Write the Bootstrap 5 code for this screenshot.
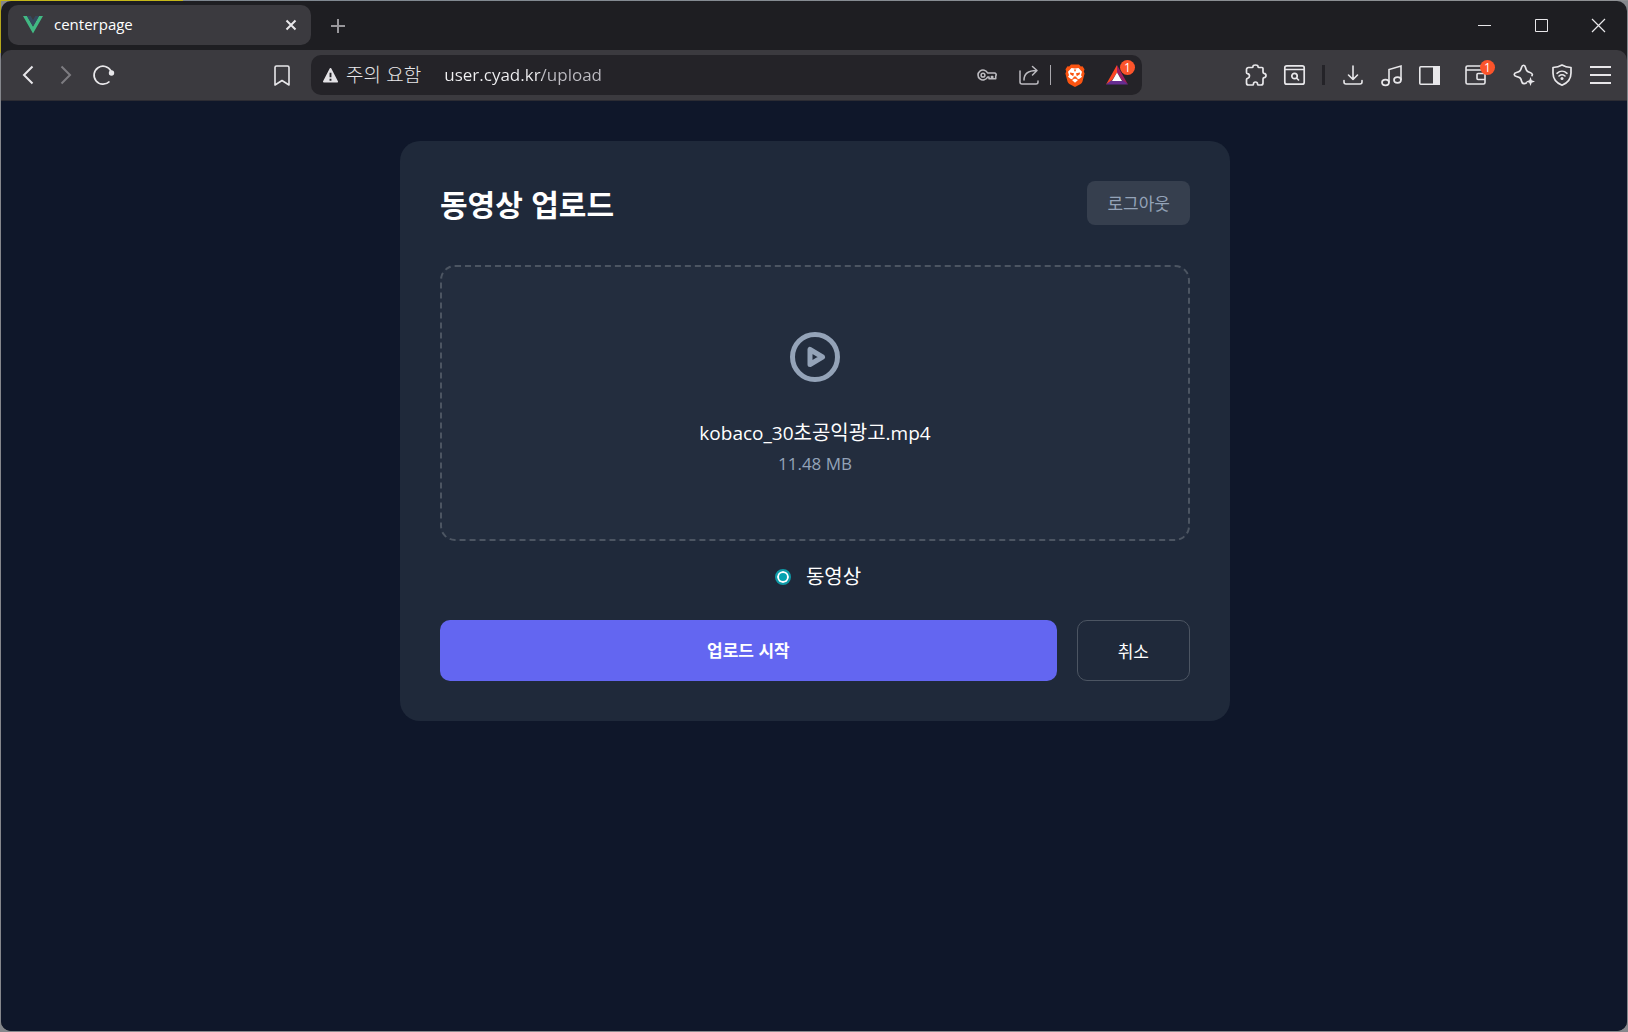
<!DOCTYPE html>
<html lang="ko">
<head>
<meta charset="utf-8">
<meta name="viewport" content="width=device-width, initial-scale=1">
<title>centerpage</title>
<link href="https://cdn.jsdelivr.net/npm/bootstrap@5.3.0/dist/css/bootstrap.min.css" rel="stylesheet">
<style>
  html, body { height: 100%; }
  body {
    font-family: "Open Sans", "Noto Sans CJK KR", sans-serif;
    color: #fff;
    padding: 1px;
    overflow: hidden;
    background: linear-gradient(to right, #c6b81a 183px, #7e8790 183px, #8f9194 100%) 0 0 / 100% 1px no-repeat,
                linear-gradient(to bottom, #b5a71c 53px, #85878c 53px) 0 0 / 1px 100% no-repeat, #85878c;
  }
  svg { display: block; fill: none; stroke: currentColor; stroke-width: 2; overflow: visible; }
  .app-window { height: 100%; border-radius: 10px; overflow: hidden; background: #1e1e22; }
  .tab-strip { height: 49px; }
  .browser-tab { width: 303px; height: 40px; margin: 4px 0 0 7px; padding: 0 9px 0 15px; border-radius: 10px; background: #3b3a3f; font-size: 15px; }
  .tab-title { padding: 0 0 2px 11px; }
  .icon-btn { border: 0; padding: 0; background: none; color: #e8e7ea; display: flex; align-items: center; justify-content: center; flex: none; position: relative; }
  .tab-close { width: 22px; height: 22px; }
  .tab-new { width: 54px; height: 49px; color: #98979b; }
  .win-ctl { width: 57px; height: 49px; }
  .toolbar { height: 51px; background: #3b3a3f; border-radius: 10px 10px 0 0; padding: 0 8px; border-bottom: 1px solid #2c2c33; }
  .toolbar .icon-btn { width: 38px; height: 40px; }
  .nav-side { width: 292px; margin-right: 10px; }
  .addr-box { height: 40px; background: #242328; border-radius: 10px; padding: 0 4px 0 11px; margin-right: 95px; min-width: 0; }
  .addr-box .icon-btn { width: 42px; color: #bcbbc0; }
  .warn-label { font-family: "Noto Sans CJK KR", sans-serif; font-weight: 300; font-size: 19px; line-height: 28px; color: #e8e7ea; margin: 0 23px 0 7px; padding-bottom: 3px; }
  .addr-field { border: 0; outline: 0; padding: 0 0 2px; min-width: 0; font-size: 17px; height: 28px; color: transparent; background: linear-gradient(to right, #f1f1f3 98px, #bdbcc2 98px); -webkit-background-clip: text; background-clip: text; }
  .addr-rule { width: 1px; height: 20px; background: #a9a8ad; margin-right: 3px; }
  .bar-rule { width: 3px; height: 20px; background: #242328; margin: 0 9px; }
  .assist-btn { margin-left: 11px; }
  .count-dot { position: absolute; top: 5px; right: 3px; width: 15px; height: 15px; border-radius: 50%; background: #fb542b; color: #fff; font-size: 12px; line-height: 15px; text-align: center; }
  .wallet-btn .count-dot { right: -1px; }
  .viewport-area { background: #0f172a; padding: 40px 20px 40px 22px; }
  .upload-card { width: 100%; max-width: 830px; padding: 40px; border-radius: 20px; background: #1f293a; }
  .page-title { font-size: 30px; font-weight: 700; line-height: 44px; font-family: "Noto Sans CJK KR", sans-serif; }
  .logout-btn { height: 44px; padding: 2px 20px 0; border: 0; border-radius: 8px; background: #363f4e; color: #94a3b8; font-size: 17px; }
  .drop-zone { margin-top: 40px; padding: 60px 20px; border: 2px dashed #4c5562; border-radius: 15px; background: #232d3e; cursor: pointer; }
  .drop-zone svg { color: #94a3b8; }
  .file-name { margin-top: 30px; font-size: 19px; line-height: 32px; }
  .file-name span { font-size: 20px; }
  .file-size { font-size: 17px; line-height: 30px; color: #94a3b8; }
  .kind-row { margin: 20px 0 27px; padding-left: 6px; font-size: 20px; line-height: 32px; gap: 15px; }
  .kind-radio { appearance: none; margin: 0; width: 16px; height: 16px; border-radius: 50%; background: #05a2b0; border: 2px solid #0f9aa7; box-shadow: inset 0 0 0 2px #fff; }
  .action-btn { height: 61px; border-radius: 10px; font-size: 17px; padding-top: 2px; }
  .start-btn { border: 0; background: #6366f1; color: #fff; font-weight: 700; }
  .cancel-btn { border: 1px solid #4c5562; background: none; color: #fff; padding: 2px 40px 0; }
</style>
</head>
<body>
<div class="app-window d-flex flex-column">
  <header class="tab-strip d-flex flex-shrink-0">
    <div class="browser-tab d-flex align-items-center">
      <svg width="20" height="18" viewBox="0 0 20 18" style="stroke:none"><path fill="#41b883" d="M0 0h4l6 10.500L16 0h4L10 17.500z"/><path fill="#35495e" d="M4 0h3.700L10 4l2.300-4H16l-6 10.500z"/></svg>
      <span class="tab-title flex-grow-1">centerpage</span>
      <button class="icon-btn tab-close" aria-label="Close tab"><svg width="10" height="10" viewBox="0 0 10 10"><path d="M0.500 0.500l9 9M9.500 0.500l-9 9"/></svg></button>
    </div>
    <button class="icon-btn tab-new" aria-label="New tab"><svg width="14" height="14" viewBox="0 0 14 14"><path d="M7 0v14M0 7h14"/></svg></button>
    <div class="d-flex ms-auto">
      <button class="icon-btn win-ctl" aria-label="Minimize"><svg width="13" height="13" viewBox="0 0 13 13"><path stroke-width="1" d="M0 6.500h13"/></svg></button>
      <button class="icon-btn win-ctl" aria-label="Maximize"><svg width="13" height="13" viewBox="0 0 13 13"><path stroke-width="1" d="M.5.5h12v12H.5z"/></svg></button>
      <button class="icon-btn win-ctl" aria-label="Close"><svg width="13" height="13" viewBox="0 0 13 13"><path stroke-width="1.200" d="M0 0l13 13M13 0L0 13"/></svg></button>
    </div>
  </header>

  <nav class="toolbar d-flex align-items-center flex-shrink-0">
    <div class="nav-side d-flex flex-shrink-0">
      <button class="icon-btn" aria-label="Back"><svg width="10" height="18" viewBox="0 0 10 18"><path d="M9.500.5L1 9l8.500 8.500"/></svg></button>
      <button class="icon-btn" aria-label="Forward"><svg width="10" height="18" viewBox="0 0 10 18" style="color:#7d7c81"><path d="M.5.5L9 9 .5 17.500"/></svg></button>
      <button class="icon-btn" aria-label="Reload"><svg width="22" height="20" viewBox="0 0 22 20"><path stroke-width="1.700" d="M18 6A9 9 0 1 0 16.500 16.500"/><circle cx="18.500" cy="8" r="2.700" fill="currentColor" stroke="none"/></svg></button>
      <button class="icon-btn ms-auto" aria-label="Bookmark"><svg width="16" height="21" viewBox="0 0 16 21"><path stroke-width="1.600" stroke-linejoin="round" d="M2.500 1h11a1.500 1.500 0 0 1 1.500 1.500V20l-7-4.500L1 20V2.500A1.500 1.500 0 0 1 2.500 1z"/></svg></button>
    </div>
    <div class="addr-box d-flex align-items-center flex-grow-1">
      <svg class="flex-shrink-0" width="17" height="16" viewBox="0 0 18 17"><path fill="#e3e2e6" stroke="#e3e2e6" stroke-width="2" stroke-linejoin="round" d="M9 2l7 13.500H2z"/><path stroke="#242328" stroke-width="2" d="M9 6v5M9 12.500v2"/></svg>
      <label class="warn-label text-nowrap" for="addr">주의 요함</label>
      <input class="addr-field flex-grow-1" id="addr" type="text" value="user.cyad.kr/upload">
      <button class="icon-btn" aria-label="Passwords"><svg width="20" height="13" viewBox="0 0 20 13"><path stroke-width="1.600" stroke-linejoin="round" d="M10.600 4H17.500a1.700 1.700 0 0 1 1.500 2.500l-.3.800v2.500h-3V7.500h-1.200v2.300H12V8H10.600A5 5 0 1 1 10.600 4z"/><circle cx="6" cy="6.200" r="1.900" stroke-width="1.500"/></svg></button>
      <button class="icon-btn" aria-label="Share"><svg width="20" height="19" viewBox="0 0 20 19"><path stroke-width="1.500" stroke-linecap="round" stroke-linejoin="round" d="M1 5v11a2 2 0 0 0 2 2h14a2 2 0 0 0 2-2v-1M5 14c0-6 4-9.500 12.500-9.500M13.500.5l4.500 4-4.500 4.500"/></svg></button>
      <div class="addr-rule"></div>
      <button class="icon-btn" aria-label="Brave Shields"><svg width="20" height="23" viewBox="0 0 20 23" style="stroke:none"><path fill="#fb5411" d="M6 .5h8l1.800 2 1.700-.3 2 3-.7 2.200.8 2-2.200 8.300c-.3 1-1 1.700-1.800 2.200L10 23l-5.600-3.100a4 4 0 0 1-1.800-2.200L.4 9.400l.8-2-.7-2.200 2-3 1.700.3z"/><path fill="#fff" d="M10 4.500l3.500-.6L17 7.700l-1 3.500 1 1.500-3.200 2.500L10 13.300l-3.800 1.900L3 12.700l1-1.500-1-3.500 3.500-3.800z"/><path fill="#fff" d="M10 14.500l3 1.500-3 2.700L7 16z"/><path fill="#fb5411" d="M5 8.500l4 .8-.8 3-3-2zM15 8.500l-4 .8.800 3 3-2zM8 13.500l2 1 2-1-1.200-1H9.200zM8.700 5.600L10 8l1.300-2.400z"/></svg></button>
      <button class="icon-btn" aria-label="Brave Rewards"><svg width="22" height="20" viewBox="0 0 22 20" style="stroke:none"><path fill="#ff4724" d="M11 0v7.500L5.500 16 0 19.500z"/><path fill="#9e1f63" d="M11 0l11 19.500L16.500 16 11 7.500z"/><path fill="#662d91" d="M0 19.500L5 15.500h12l5 4z"/><path fill="#fff" d="M11 7.500l5 8.500H6z"/></svg><span class="count-dot">1</span></button>
    </div>
    <button class="icon-btn" aria-label="Extensions"><svg width="22" height="22" viewBox="0 0 22 22"><path stroke-width="1.700" stroke-linejoin="round" d="M3.500 3.500H7c.8 0 1-.5 1-1C8 1.500 9 1 10.500 1S13 1.500 13 2.500c0 .5.200 1 1 1h3a1 1 0 0 1 1 1V8c0 .8.500 1.200 1 1.300 1.300.2 2 1 2 2.200s-.7 2-2 2.200c-.5.100-1 .5-1 1.300v4a2 2 0 0 1-2 2h-2.500c-.7 0-1-.4-1-1 0-1.200-.7-2-2-2s-2 .8-2 2c0 .6-.3 1-1 1H3.500a2 2 0 0 1-2-2V15.500c0-.7.500-1 1-1.100 1.300-.3 2-1 2-2.400s-.7-2.100-2-2.300c-.5-.1-1-.5-1-1.200V5.500a2 2 0 0 1 2-2z"/></svg></button>
    <button class="icon-btn" aria-label="Search tabs"><svg width="21" height="20" viewBox="0 0 21 20"><rect x=".8" y=".8" width="19.400" height="18.400" rx="2" stroke-width="1.700"/><path stroke-width="1.700" d="M1 4.500h19M12.500 13l2.500 2.500"/><circle cx="10.500" cy="11" r="2.700" stroke-width="1.700"/></svg></button>
    <div class="bar-rule"></div>
    <button class="icon-btn" aria-label="Downloads"><svg width="20" height="20" viewBox="0 0 20 20"><path stroke-width="1.600" stroke-linecap="round" stroke-linejoin="round" d="M10 1v13.500M5.500 10l4.500 4.500 4.500-4.500M1 15.500V17a2 2 0 0 0 2 2h14a2 2 0 0 0 2-2v-1.500"/></svg></button>
    <button class="icon-btn" aria-label="Playlist"><svg width="21" height="21" viewBox="0 0 21 21"><path stroke-width="1.600" d="M8 17.500V4.500L20 1v14"/><ellipse cx="4.500" cy="17.500" rx="3.500" ry="2.800" stroke-width="1.700"/><ellipse cx="16.500" cy="15" rx="3.500" ry="2.800" stroke-width="1.700"/></svg></button>
    <button class="icon-btn" aria-label="Sidebar"><svg width="21" height="19" viewBox="0 0 21 19"><rect x=".8" y=".8" width="19.400" height="17.400" rx="1" stroke-width="1.600"/><path fill="currentColor" stroke="none" d="M14 0h7v19h-7z"/></svg></button>
    <button class="icon-btn wallet-btn ms-2" aria-label="Wallet"><svg width="21" height="20" viewBox="0 0 21 20"><path stroke-width="1.600" stroke-linejoin="round" d="M17 1H2.500A1.500 1.500 0 0 0 1 2.500V17.500A1.500 1.500 0 0 0 2.500 19H18.500A1.500 1.500 0 0 0 20 17.500V6.500A1.500 1.500 0 0 0 18.500 5H1M20 8.500h-7a1 1 0 0 0-1 1v4a1 1 0 0 0 1 1h7z"/></svg><span class="count-dot">1</span></button>
    <button class="icon-btn assist-btn" aria-label="Leo AI"><svg width="22" height="22" viewBox="0 0 22 22"><path stroke-width="1.700" stroke-linejoin="round" d="M14 18.200c-1.500 2-5 2-5.500-1.200C8 14 7 13.500 3.500 12.500c-3-.8-3-3.200 0-4C7 7.500 7.500 7 8.500 3.500c.8-3 3.200-3 4 0C13.500 7 14 7.500 17 8.500c2.500.8 3 2.500 1.500 3.700"/><path fill="currentColor" stroke="none" d="M17.500 13l1.200 3.300L22 17.500l-3.300 1.200L17.500 22l-1.200-3.300L13 17.500l3.300-1.200z"/></svg></button>
    <button class="icon-btn" aria-label="VPN"><svg width="20" height="22" viewBox="0 0 20 22"><path stroke-width="1.700" stroke-linejoin="round" d="M10 1c2.500 1.500 5.500 2.300 9 2.500V9c0 6-3 9.800-9 12.200C4 18.800 1 15 1 9V3.500C4.500 3.300 7.500 2.500 10 1z"/><path stroke-width="1.600" stroke-linecap="round" d="M5 9.300c3-2.800 7-2.800 10 0M7 12c2-1.700 4-1.700 6 0"/><circle cx="10" cy="14.500" r="1.500" fill="currentColor" stroke="none"/></svg></button>
    <button class="icon-btn" aria-label="Menu"><svg width="21" height="18" viewBox="0 0 21 18"><path stroke-width="1.800" d="M0 1h21M0 9h21M0 17h21"/></svg></button>
  </nav>

  <main class="viewport-area flex-grow-1 d-flex flex-column align-items-center">
    <form class="upload-card">
      <div class="d-flex align-items-center justify-content-between">
        <h1 class="page-title m-0">동영상 업로드</h1>
        <button type="button" class="logout-btn">로그아웃</button>
      </div>
      <div class="drop-zone d-flex flex-column align-items-center text-center">
        <svg width="60" height="60" viewBox="0 0 24 24"><circle cx="12" cy="12" r="9"/><path stroke-linejoin="round" d="M10 9v6l5-3z"/></svg>
        <div class="file-name">kobaco_30<span>초공익광고</span>.mp4</div>
        <div class="file-size">11.48 MB</div>
      </div>
      <div class="kind-row d-flex align-items-center justify-content-center">
        <input class="kind-radio" type="radio" name="kind" id="kindVideo" checked>
        <label for="kindVideo">동영상</label>
      </div>
      <div class="d-flex" style="gap:20px">
        <button type="submit" class="action-btn start-btn flex-grow-1">업로드 시작</button>
        <button type="button" class="action-btn cancel-btn">취소</button>
      </div>
    </form>
  </main>
</div>
<script src="https://cdn.jsdelivr.net/npm/bootstrap@5.3.0/dist/js/bootstrap.bundle.min.js"></script>
</body>
</html>
